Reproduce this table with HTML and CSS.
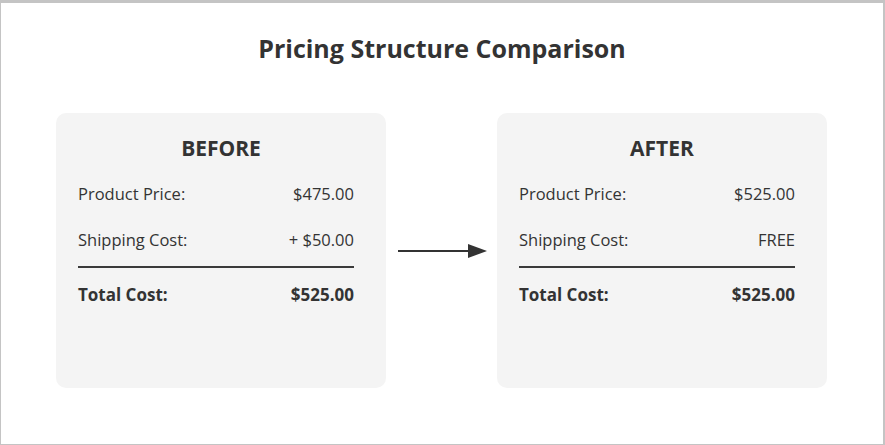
FILE: index.html
```html
<!DOCTYPE html>
<html lang="en">
<head>
  <meta charset="UTF-8">
  <title>Pricing Structure Comparison</title>
  <link rel="stylesheet" href="styles.css">
</head>
<body>
  <div class="frame">
    <h1>Pricing Structure Comparison</h1>

    <div class="compare">
      <!-- before -->
      <div class="card">
        <h2>BEFORE</h2>
        <div class="row"><span>Product Price:</span><span>$475.00</span></div>
        <div class="row"><span>Shipping Cost:</span><span>+ $50.00</span></div>
        <div class="divider"></div>
        <div class="row total"><span>Total Cost:</span><span>$525.00</span></div>
      </div>

      <div class="arrow">
        <svg width="111" height="20" viewBox="0 0 111 20">
          <line x1="12" y1="10" x2="84" y2="10" stroke="#333" stroke-width="2"/>
          <polygon points="82,3 101,10 82,17" fill="#333"/>
        </svg>
      </div>

      <!-- after -->
      <div class="card">
        <h2>AFTER</h2>
        <div class="row"><span>Product Price:</span><span>$525.00</span></div>
        <div class="row"><span>Shipping Cost:</span><span>FREE</span></div>
        <div class="divider"></div>
        <div class="row total"><span>Total Cost:</span><span>$525.00</span></div>
      </div>
    </div>
  </div>
</body>
</html>
```

FILE: styles.css
```css
body {
  margin: 0;
  font-family: "Open Sans", "Noto Sans", sans-serif;
  color: #333;
  background: #fff;
}
.frame {
  width: 885px;
  height: 445px;
  box-sizing: border-box;
  border-style: solid;
  border-color: #c4c4c4;
  border-width: 3px 2px 1px 1px;
}
h1 {
  margin: 29px 0 0;
  height: 33px;
  line-height: 33px;
  font-size: 25px;
  font-weight: 700;
  text-align: center;
}
/* two cards with the arrow between */
.compare {
  display: flex;
  align-items: center;
  margin: 48px 0 0 55px;
}
.card {
  width: 330px;
  height: 275px;
  box-sizing: border-box;
  padding: 22px 32px 0 22px;
  background: #f4f4f4;
  border-radius: 10px;
}
.card h2 {
  margin: 0 0 21px;
  height: 27px;
  line-height: 27px;
  font-size: 21px;
  font-weight: 700;
  text-align: center;
  padding-left: 10px;
}
.row {
  display: flex;
  justify-content: space-between;
  height: 22px;
  line-height: 22px;
  font-size: 16.5px;
}
.row + .row {
  margin-top: 24px;
}
.divider {
  margin: 15px 0 16px;
  border-top: 2px solid #3a3a3a;
}
.total {
  font-weight: 700;
  font-size: 17px;
}
.arrow {
  width: 111px;
  display: flex;
}
```
